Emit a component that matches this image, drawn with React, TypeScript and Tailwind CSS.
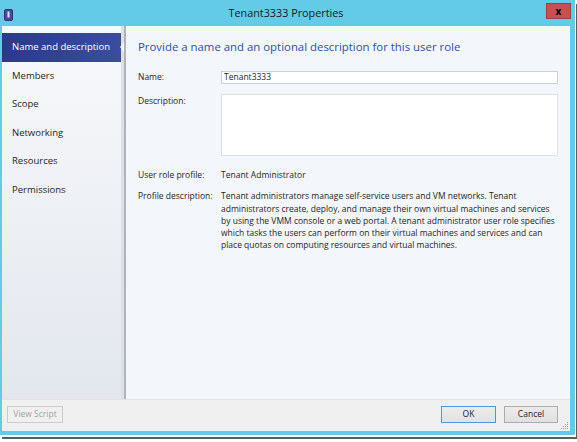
const sections = ['Name and description', 'Members', 'Scope', 'Networking', 'Resources', 'Permissions'];

const profileLines = [
  'Tenant administrators manage self-service users and VM networks. Tenant',
  'administrators create, deploy, and manage their own virtual machines and services',
  'by using the VMM console or a web portal. A tenant administrator user role specifies',
  'which tasks the users can perform on their virtual machines and services and can',
  'place quotas on computing resources and virtual machines.',
];

function WindowIcon() {
  return (
    <svg width="9" height="12" viewBox="0 0 9 12" className="absolute left-[2px] top-[9px]">
      <rect x="0.5" y="0.5" width="8" height="11" rx="1.5" fill="#3d4f9e" stroke="#27366f" />
      <rect x="3.5" y="2.5" width="2" height="6" fill="#dfe6f5" />
    </svg>
  );
}

function ResizeGrip() {
  const dots = [
    [6, 0], [6, 2], [4, 2], [6, 4], [4, 4], [2, 4], [6, 6], [4, 6], [2, 6], [0, 6],
  ];
  return (
    <svg width="8" height="8" viewBox="0 0 8 8" className="absolute right-[1px] bottom-[1px]">
      {dots.map(([x, y], i) => (
        <rect key={i} x={x} y={y} width="1" height="1" fill="#9a9a9a" />
      ))}
    </svg>
  );
}

export default function App() {
  return (
    <div className="w-[577px] h-[442px] bg-white font-['Open_Sans','Noto_Sans',sans-serif] text-[#1e1e1e]">
      <div className="flex flex-col w-[575px] h-[435px] bg-[#63cbe8] pl-[2px] pr-[5px] pb-[4px] shadow-[1px_2px_0_#ffffff,2px_4px_0_#5c5c5c]">
        {/* title bar */}
        <div className="relative h-[26px] shrink-0 flex items-center justify-center">
          <WindowIcon />
          <span className="text-[10.8px] text-[#1a1a1a] leading-none">Tenant3333 Properties</span>
          <div className="absolute right-[-1px] top-[3px] w-[25px] h-[16px] bg-[#c75050] border border-[#a53b3b] flex items-center justify-center text-[10px] font-bold leading-none text-black">
            x
          </div>
        </div>

        <div className="flex flex-1 min-h-0">
          {/* sidebar */}
          <div className="w-[119px] shrink-0 pt-[7px] bg-gradient-to-b from-[#f8f9fb] to-[#e2e7ee]">
            {sections.map((s, i) =>
              i === 0 ? (
                <div
                  key={s}
                  className="relative h-[28.5px] pl-[10px] flex items-center text-[9.5px] text-white bg-gradient-to-r from-[#2b3a88] to-[#3a4d9f]"
                >
                  {s}
                  <span className="absolute z-10 right-[-3px] top-1/2 -translate-y-1/2 w-0 h-0 border-y-[5px] border-y-transparent border-r-[4px] border-r-[#f3f6fa]" />
                </div>
              ) : (
                <div key={s} className="h-[28.5px] pl-[10px] flex items-center text-[9.5px] text-[#1e1e1e]">
                  {s}
                </div>
              )
            )}
          </div>
          <div className="w-[5px] shrink-0 bg-[#dde1e7] border-r-2 border-[#b0b4ba]" />

          {/* content */}
          <div className="flex-1 bg-[#f3f6fa] px-[12px] pt-[13px] text-[8.5px]">
            <h1 className="text-[11.4px] leading-[16px] text-[#2b4fa2]">
              Provide a name and an optional description for this user role
            </h1>

            <div className="flex items-center mt-[16px] h-[13px]">
              <span className="w-[83px] shrink-0">Name:</span>
              <div className="flex-1 h-[13px] bg-white border border-[#c9d0da] pl-[2px] flex items-center leading-none">
                Tenant3333
              </div>
            </div>

            <div className="flex mt-[10px]">
              <span className="w-[83px] shrink-0 pt-[1px] leading-[12px]">Description:</span>
              <div className="flex-1 h-[62px] bg-white border border-[#dde2e9]" />
            </div>

            <div className="flex mt-[13px] leading-[12.3px]">
              <span className="w-[83px] shrink-0">User role profile:</span>
              <span>Tenant Administrator</span>
            </div>

            <div className="flex mt-[9px] leading-[12.3px]">
              <span className="w-[83px] shrink-0">Profile description:</span>
              <div className="whitespace-nowrap">
                {profileLines.map((l) => (
                  <div key={l}>{l}</div>
                ))}
              </div>
            </div>
          </div>
        </div>

        {/* footer */}
        <div className="relative h-[32px] shrink-0 bg-[#f0f0f0] border-t border-[#e2e2e2] flex items-start justify-between pl-[5px] pr-[12px] pt-[6px] text-[8.5px]">
          <button className="w-[56px] h-[17px] border border-[#cbcbcb] bg-[#f0f0f0] text-[#a3a3a3] leading-none">
            View Script
          </button>
          <div className="flex gap-[8px]">
            <button className="w-[55px] h-[17px] border border-[#3d9ee3] bg-gradient-to-b from-[#ececec] to-[#e2e2e2] text-[#1e1e1e] leading-none">
              OK
            </button>
            <button className="w-[54px] h-[17px] border border-[#acacac] bg-gradient-to-b from-[#ececec] to-[#e0e0e0] text-[#1e1e1e] leading-none">
              Cancel
            </button>
          </div>
          <ResizeGrip />
        </div>
      </div>
    </div>
  );
}
